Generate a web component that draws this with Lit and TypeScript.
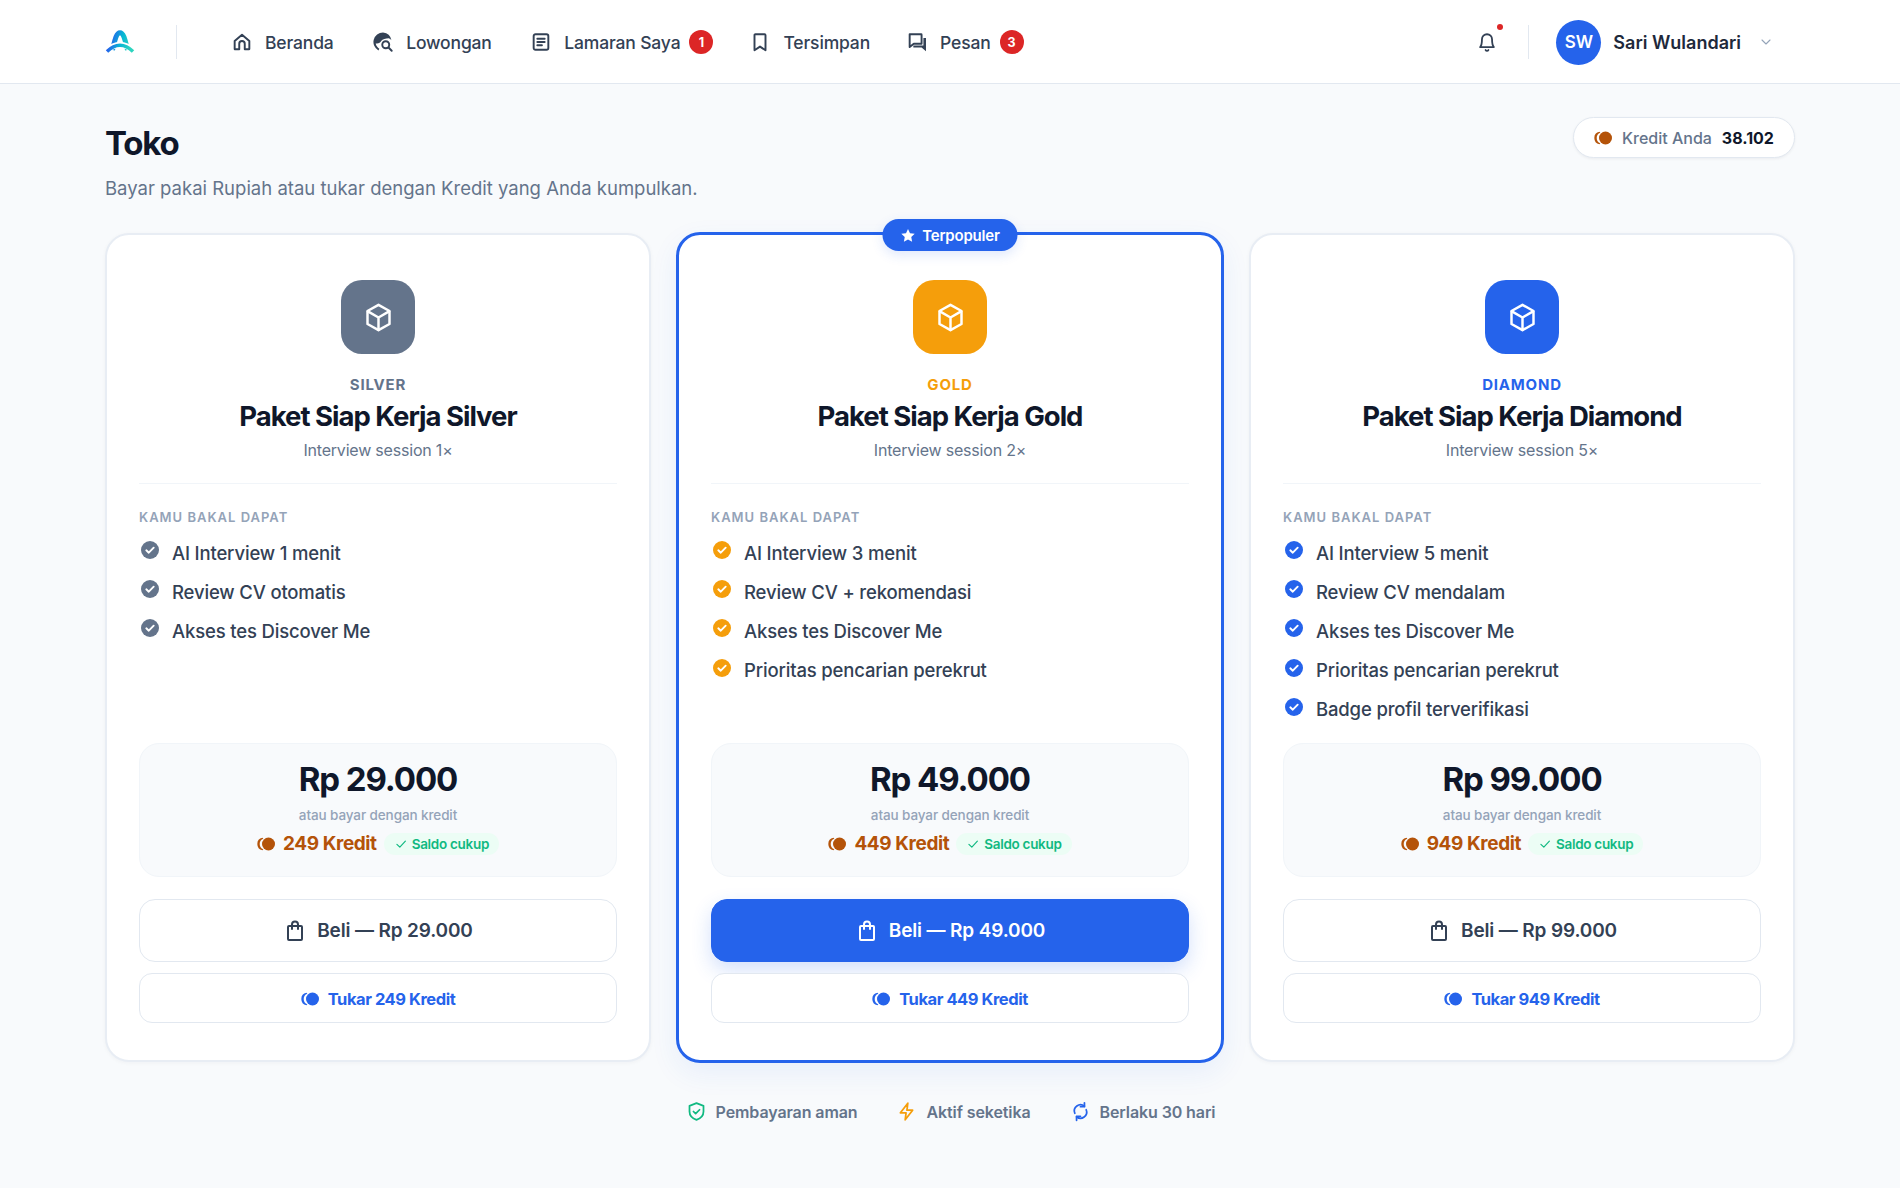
import { LitElement, html, css, svg } from "lit";
import { customElement } from "lit/decorators.js";

const ic = (body: unknown, size = 20, sw = 2) => html`<svg class="ic" width=${size} height=${size} viewBox="0 0 24 24" fill="none" stroke="currentColor" stroke-width=${sw} stroke-linecap="round" stroke-linejoin="round">${body}</svg>`;

const home = svg`<path d="M4 11 12 4l8 7v8.500a.5.5 0 0 1-.5.5H15v-6a3 3 0 0 0-6 0v6H4.500a.5.5 0 0 1-.5-.5z"/>`;
const globe = svg`<path fill="currentColor" stroke="none" d="M12 1.500A10.500 10.500 0 0 0 7 21.200l1-1.900C6 18 4.600 16 4 13.500 7 14 9 13 10 11c1.500-2 5-3 8.200-3 1.200.3 2.300 1 3 2A10.500 10.500 0 0 0 12 1.500z"/><circle cx="15" cy="15" r="3.800"/><path d="m18 18 3.500 3.500"/>`;
const doc = svg`<rect x="4" y="3.500" width="16" height="17" rx="2"/><path d="M8 8.500h8M8 12h8M8 15.500h5"/>`;
const bookmark = svg`<path d="M6 4.500a1 1 0 0 1 1-1h10a1 1 0 0 1 1 1V21l-6-4-6 4z"/>`;
const chat = svg`<path d="M4 3.500h12.500a.5.5 0 0 1 .5.5v10H8.500L4 17.500z"/><path fill="currentColor" stroke="none" d="M19 7.500h2.800v14.500L17 18H8v-2.200h11z"/>`;
const bell = svg`<path d="M12 3.500a5.500 5.500 0 0 0-5.500 5.500c0 5-1 7.500-2 8.500h15c-1-1-2-3.500-2-8.500A5.500 5.500 0 0 0 12 3.500z"/><path d="M10.500 20.800a1.700 1.700 0 0 0 3 0"/>`;
const chevron = svg`<path d="m6 9 6 6 6-6"/>`;
const box = svg`<path d="M12 2.800 20 7.300v9.400l-8 4.500-8-4.500V7.300z"/><path d="M4.300 7.500 12 12l7.700-4.500M12 12v9"/>`;
const bag = svg`<path d="M6 7h12a1 1 0 0 1 1 1v12a1 1 0 0 1-1 1H6a1 1 0 0 1-1-1V8a1 1 0 0 1 1-1z"/><path d="M9 10V5.500a3 3 0 0 1 6 0V10"/>`;
const shield = svg`<path d="M12 2.500 20 5.500v6.500c0 5-3.500 8-8 9.500-4.500-1.500-8-4.500-8-9.500V5.500z"/><path d="m8.500 12 2.500 2.500 4.500-4.500"/>`;
const zap = svg`<path d="M13.500 2.500 5 13.500h6.500L10.500 21.500 19 10.500h-6.500z"/>`;
const refresh = svg`<path d="M5.500 14A7 7 0 0 1 16.500 6"/><path d="M16.500 2v4.500H12"/><path d="M18.500 10A7 7 0 0 1 7.500 18"/><path d="M7.500 22v-4.500H12"/>`;

const coin = (w = 18) => html`<svg class="coin" width=${w} height=${Math.round(w * 0.78)} viewBox="0 0 18 14" fill="currentColor"><circle cx="11.500" cy="7" r="6.500"/><path d="M5.500 .8A6.300 6.300 0 0 0 5.500 13.200L6.300 12.300A5.700 5.700 0 0 1 6.300 1.700z"/></svg>`;
const tick = (c: string) => html`<svg class="tick" width="18" height="18" viewBox="0 0 18 18" style="color:${c}"><circle cx="9" cy="9" r="9" fill="currentColor"/><path d="m5.300 9.300 2.500 2.400 4.900-5" fill="none" stroke="#fff" stroke-width="1.900" stroke-linecap="round" stroke-linejoin="round"/></svg>`;

const nav = [
  { t: "Beranda", i: home },
  { t: "Lowongan", i: globe },
  { t: "Lamaran Saya", i: doc, b: 1 },
  { t: "Tersimpan", i: bookmark, k: "tight" },
  { t: "Pesan", i: chat, b: 3 },
];

const plans = [
  { tier: "SILVER", name: "Paket Siap Kerja Silver", n: "1", c: "#64748b", price: "29.000", cr: 249,
    feats: ["AI Interview 1 menit", "Review CV otomatis", "Akses tes Discover Me"] },
  { tier: "GOLD", name: "Paket Siap Kerja Gold", n: "2", c: "#f59e0b", price: "49.000", cr: 449, pop: true,
    feats: ["AI Interview 3 menit", "Review CV + rekomendasi", "Akses tes Discover Me", "Prioritas pencarian perekrut"] },
  { tier: "DIAMOND", name: "Paket Siap Kerja Diamond", n: "5", c: "#2563eb", price: "99.000", cr: 949,
    feats: ["AI Interview 5 menit", "Review CV mendalam", "Akses tes Discover Me", "Prioritas pencarian perekrut", "Badge profil terverifikasi"] },
];

@customElement("app-root")
export class AppRoot extends LitElement {
  static styles = css`
    :host { display: block; min-height: 100vh; background: #f8fafc; font-family: "Inter", "Liberation Sans", sans-serif; color: #0f172a; }
    * { box-sizing: border-box; }
    .ic, .coin, .tick { display: block; flex: none; }
    header { height: 84px; background: #fff; border-bottom: 1px solid #e2e8f0; display: flex; align-items: center; padding: 1px 105px 0; }
    .logo { margin-right: 41px; }
    .vr { width: 1px; height: 34px; background: #e2e8f0; flex: none; }
    nav { display: flex; align-items: center; margin-left: 54px; gap: 38.500px; }
    .nav-item { display: flex; align-items: center; gap: 12px; font-size: 17.500px; font-weight: 500; color: #334155; letter-spacing: -0.15px; }
    .nav-item.tight { margin-right: -2.500px; }
    .nav-item .badge { margin-left: -3px; margin-right: -2.500px; width: 24px; height: 24px; border-radius: 50%; background: #dc2626; color: #fff; font-size: 12.500px; font-weight: 700; display: flex; align-items: center; justify-content: center; letter-spacing: 0; }
    .right { margin-left: auto; display: flex; align-items: center; padding-right: 21px; }
    .bell { position: relative; color: #334155; margin-right: 30px; }
    .bell i { position: absolute; right: -5px; top: -7px; width: 6px; height: 6px; border-radius: 50%; background: #dc2626; }
    .avatar { margin-left: 27px; width: 45px; height: 45px; border-radius: 50%; background: #2563eb; color: #fff; font-size: 17px; font-weight: 600; display: flex; align-items: center; justify-content: center; }
    .uname { margin-left: 12px; font-size: 18px; font-weight: 600; color: #1e293b; letter-spacing: 0; }
    .chev { margin-left: 17px; color: #94a3b8; }

    main { padding: 33px 105px 0; }
    .head { display: flex; justify-content: space-between; align-items: flex-start; }
    h1 { margin: 0; font-size: 33px; line-height: 52px; font-weight: 700; letter-spacing: -1.200px; color: #0f172a; }
    .sub { margin: 5px 0 0; font-size: 18.500px; line-height: 28px; color: #64748b; letter-spacing: 0; }
    .pill { height: 41px; width: 222px; background: #fff; border: 1px solid #e2e8f0; border-radius: 21px; display: flex; align-items: center; gap: 10px; padding: 0 0 0 20px; font-size: 16px; box-shadow: 0 1px 3px rgba(15,23,42,.06); color: #64748b; }
    .pill .coin { color: #b45309; }
    .pill b { color: #0f172a; font-weight: 700; font-size: 16px; }
    .pill span { font-weight: 500; }

    .grid { margin-top: 31px; display: grid; grid-template-columns: repeat(3, 1fr); gap: 26px; }
    .card { position: relative; background: #fff; border: 2px solid #e8edf4; border-radius: 24px; padding: 45px 32px 37px; display: flex; flex-direction: column; box-shadow: 0 1px 4px rgba(15,23,42,.04); }
    .card.pop { margin: -1px; border: 3px solid #2563eb; box-shadow: 0 10px 28px rgba(37,99,235,.08); }
    .ribbon { position: absolute; top: -16px; left: 50%; transform: translateX(-50%); height: 32px; width: 135px; border-radius: 16px; background: #2563eb; color: #fff; display: flex; align-items: center; justify-content: center; gap: 7px; font-size: 15px; font-weight: 600; letter-spacing: -0.2px; box-shadow: 0 4px 12px rgba(37,99,235,.15); }
    .ribbon svg { flex: none; }
    .tile { width: 74px; height: 74px; border-radius: 21px; margin: 0 auto; display: flex; align-items: center; justify-content: center; color: #fff; }
    .tier { margin-top: 21px; text-align: center; font-size: 15px; line-height: 20px; font-weight: 700; letter-spacing: 0.800px; }
    h2 { margin: 3px 0 0; text-align: center; font-size: 27.500px; line-height: 36px; font-weight: 700; letter-spacing: -1px; color: #0f172a; }
    .ses { margin-top: 4px; text-align: center; font-size: 16px; line-height: 24px; color: #64748b; letter-spacing: -0.2px; }
    .line { margin-top: 21px; height: 1px; background: #f1f5f9; }
    .kamu { margin-top: 24px; font-size: 13px; line-height: 18px; font-weight: 600; color: #94a3b8; letter-spacing: 1px; }
    ul { list-style: none; margin: 7px 0 0; padding: 0; flex: 1; min-height: 210px; }
    li { display: flex; align-items: center; gap: 13px; height: 39.200px; font-size: 18.500px; font-weight: 500; color: #334155; letter-spacing: -0.16px; }
    li .tick { margin-left: 2px; margin-top: -5px; }
    .price { height: 134px; background: #f8fafc; border: 1px solid #f1f5f9; border-radius: 20px; display: flex; flex-direction: column; align-items: center; padding-top: 13px; }
    .amt { font-size: 33px; line-height: 44px; font-weight: 700; letter-spacing: -1.100px; color: #0f172a; }
    .atau { margin-top: 4px; font-size: 13.500px; line-height: 20px; font-weight: 500; color: #94a3b8; letter-spacing: -0.1px; }
    .kr { margin-top: 7px; display: flex; align-items: center; color: #b45309; font-size: 19px; font-weight: 700; letter-spacing: -0.4px; }
    .kr > span { margin-left: 8px; }
    .ok { margin-left: 7px; height: 22px; padding: 0 10px; border-radius: 11px; background: #ecfdf5; color: #10b981; font-size: 13.500px; font-weight: 600; display: flex; align-items: center; gap: 4px; letter-spacing: -0.3px; }
    .btn { width: 100%; display: flex; align-items: center; justify-content: center; font-family: inherit; background: #fff; border: 1.500px solid #e2e8f0; cursor: pointer; }
    .buy { margin-top: 22px; height: 63px; padding-top: 1px; border-radius: 16px; gap: 10px; font-size: 19px; font-weight: 600; color: #334155; letter-spacing: -0.15px; }
    .buy.primary { background: #2563eb; color: #fff; border-color: #2563eb; box-shadow: 0 8px 20px rgba(37,99,235,.2); }
    .swap { margin-top: 11px; height: 50px; padding-top: 2px; border-radius: 13px; gap: 9px; font-size: 16.500px; font-weight: 700; color: #2563eb; letter-spacing: -0.45px; }

    footer { margin-top: 39px; display: flex; justify-content: center; gap: 39px; padding-left: 1px; }
    .tr { display: flex; align-items: center; gap: 9px; font-size: 16px; line-height: 20px; font-weight: 600; color: #64748b; letter-spacing: -0.1px; }
  `;

  render() {
    return html`
      <header>
        <svg class="logo ic" width="30" height="24" viewBox="0 0 30 24" fill="none">
          <defs>
            <linearGradient id="lg" gradientUnits="userSpaceOnUse" x1="5" y1="10" x2="26" y2="16"><stop offset="0" stop-color="#2563eb"/><stop offset=".5" stop-color="#06b6d4"/><stop offset="1" stop-color="#2dd4bf"/></linearGradient>
          </defs>
          <path d="M7.500 20C9.500 12 11 2.800 15 2.800S20.500 12 22.500 20" stroke="url(#lg)" stroke-width="5"/>
          <path d="M1 21C6 16.500 11 15 15 15s9 1.500 14 6" stroke="#fff" stroke-width="6"/>
          <path d="M2 21.500C6.500 17 11 15.200 15 15.200s8.500 1.800 13 6.300" stroke="url(#lg)" stroke-width="3.400"/>
        </svg>
        <div class="vr"></div>
        <nav>
          ${nav.map((n) => html`<div class="nav-item ${n.k ?? ""}">${ic(n.i, 22, 2.100)}<span>${n.t}</span>${n.b ? html`<span class="badge">${n.b}</span>` : ""}</div>`)}
        </nav>
        <div class="right">
          <div class="bell">${ic(bell, 22, 2)}<i></i></div>
          <div class="vr"></div>
          <div class="avatar">SW</div>
          <div class="uname">Sari Wulandari</div>
          <div class="chev">${ic(chevron, 16, 1.600)}</div>
        </div>
      </header>
      <main>
        <div class="head">
          <div>
            <h1>Toko</h1>
            <p class="sub">Bayar pakai Rupiah atau tukar dengan Kredit yang Anda kumpulkan.</p>
          </div>
          <div class="pill">${coin(18)}<span>Kredit Anda</span><b>38.102</b></div>
        </div>
        <div class="grid">
          ${plans.map((p) => html`
            <div class="card ${p.pop ? "pop" : ""}">
              ${p.pop ? html`<div class="ribbon"><svg width="15" height="15" viewBox="0 0 24 24" fill="currentColor"><path d="m12 1.500 3.200 6.900 7.500.9-5.500 5.200 1.400 7.500-6.600-3.700-6.600 3.700 1.400-7.500L1.300 9.300l7.500-.9z"/></svg>Terpopuler</div>` : ""}
              <div class="tile" style="background:${p.c}">${ic(box, 33, 1.800)}</div>
              <div class="tier" style="color:${p.c}">${p.tier}</div>
              <h2>${p.name}</h2>
              <div class="ses">Interview session ${p.n}×</div>
              <div class="line"></div>
              <div class="kamu">KAMU BAKAL DAPAT</div>
              <ul>${p.feats.map((f) => html`<li>${tick(p.c)}<span>${f}</span></li>`)}</ul>
              <div class="price">
                <div class="amt">Rp ${p.price}</div>
                <div class="atau">atau bayar dengan kredit</div>
                <div class="kr">${coin(18)}<span>${p.cr} Kredit</span>
                  <div class="ok"><svg width="14" height="14" viewBox="0 0 24 24" fill="none" stroke="currentColor" stroke-width="2" stroke-linecap="round" stroke-linejoin="round"><path d="m5 12.500 5 5L19.500 7"/></svg>Saldo cukup</div>
                </div>
              </div>
              <button class="btn buy ${p.pop ? "primary" : ""}">${ic(bag, 24, 2)}Beli — Rp ${p.price}</button>
              <button class="btn swap">${coin(18)}Tukar ${p.cr} Kredit</button>
            </div>`)}
        </div>
        <footer>
          <div class="tr"><span style="color:#10b981">${ic(shield, 21, 2)}</span>Pembayaran aman</div>
          <div class="tr"><span style="color:#f59e0b">${ic(zap, 21, 2)}</span>Aktif seketika</div>
          <div class="tr"><span style="color:#2563eb">${ic(refresh, 21, 2)}</span>Berlaku 30 hari</div>
        </footer>
      </main>
    `;
  }
}
